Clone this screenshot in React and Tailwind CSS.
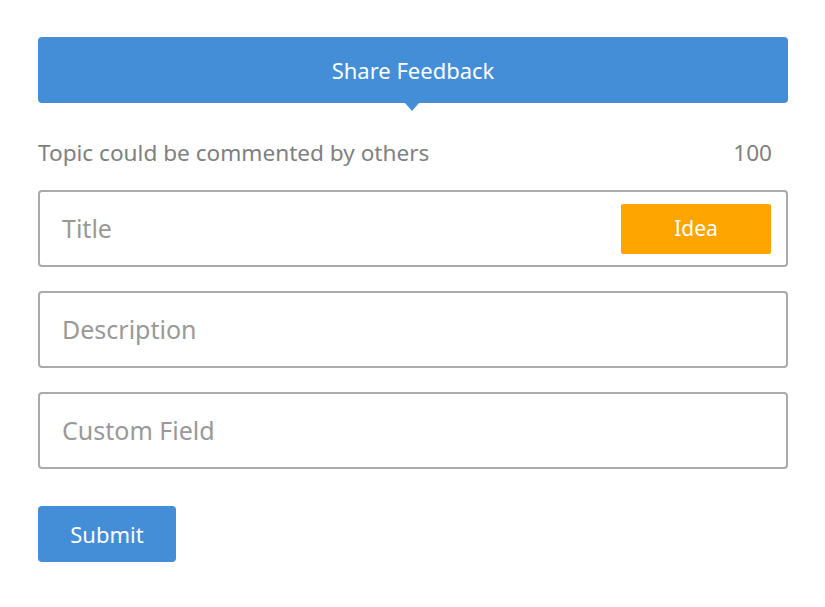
export default function App() {
  return (
    <div className="min-h-screen bg-white" style={{ fontFamily: '"Noto Sans", "Open Sans", sans-serif' }}>
      <div className="pt-[37px] px-[38px] w-[826px]">
        <div className="relative h-[66px] bg-[#448ed8] rounded-[4px] flex items-center justify-center">
          <span className="text-white text-[22px]">Share Feedback</span>
          <div className="absolute left-[367px] top-[66px] w-0 h-0 border-l-[7px] border-r-[7px] border-t-[8px] border-l-transparent border-r-transparent border-t-[#448ed8]" />
        </div>

        <div className="flex items-center justify-between mt-[37px] pr-[16px] text-[22.6px] text-[#808080] h-[26px]">
          <span>Topic could be commented by others</span>
          <span>100</span>
        </div>

        <div className="mt-[24px] flex flex-col gap-[24px]">
          <div className="h-[77px] border-2 border-[#aaaaaa] rounded-[4px] flex items-center justify-between pl-[22px] pr-[15px]">
            <span className="text-[25px] text-[#999999]">Title</span>
            <button className="w-[150px] h-[50px] bg-[#ffa500] rounded-[2px] text-white text-[21px]">Idea</button>
          </div>
          <div className="h-[77px] border-2 border-[#aaaaaa] rounded-[4px] flex items-center pl-[22px]">
            <span className="text-[25px] text-[#999999]">Description</span>
          </div>
          <div className="h-[77px] border-2 border-[#aaaaaa] rounded-[4px] flex items-center pl-[22px]">
            <span className="text-[25px] text-[#999999]">Custom Field</span>
          </div>
        </div>

        <button className="mt-[37px] w-[138px] h-[56px] bg-[#448ed8] rounded-[4px] text-white text-[22px]">Submit</button>
      </div>
    </div>
  );
}
